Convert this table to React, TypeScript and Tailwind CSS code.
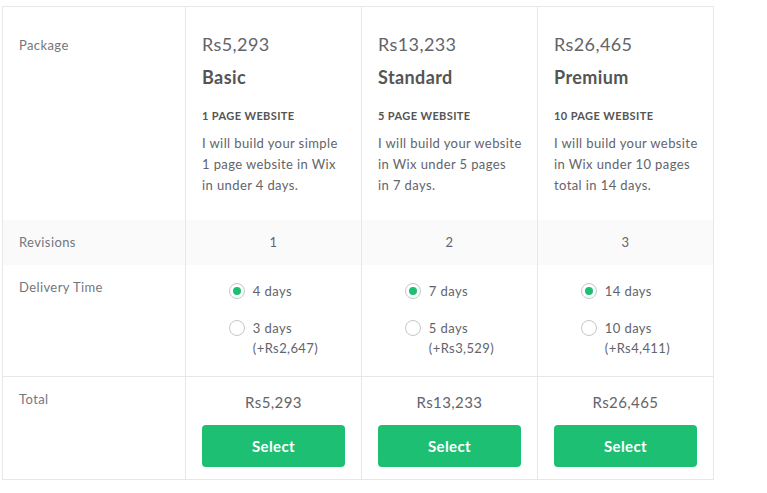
import React from 'react';

const plans = [
  {
    price: 'Rs5,293',
    name: 'Basic',
    tag: '1 PAGE WEBSITE',
    desc: ['I will build your simple', '1 page website in Wix', 'in under 4 days.'],
    revisions: '1',
    fast: '4 days',
    slow: '3 days',
    extra: '(+Rs2,647)',
  },
  {
    price: 'Rs13,233',
    name: 'Standard',
    tag: '5 PAGE WEBSITE',
    desc: ['I will build your website', 'in Wix under 5 pages', 'in 7 days.'],
    revisions: '2',
    fast: '7 days',
    slow: '5 days',
    extra: '(+Rs3,529)',
  },
  {
    price: 'Rs26,465',
    name: 'Premium',
    tag: '10 PAGE WEBSITE',
    desc: ['I will build your website', 'in Wix under 10 pages', 'total in 14 days.'],
    revisions: '3',
    fast: '14 days',
    slow: '10 days',
    extra: '(+Rs4,411)',
  },
];

const rowGrid = 'grid grid-cols-[182px_176px_176px_176px]';

export default function App() {
  return (
    <div className="bg-white min-h-screen pt-[6px] pl-[2px] font-['Lato','Liberation_Sans',sans-serif] tracking-[0.025em] text-[#62646a]">
      <div className="w-[712px] border border-[#e6e7e9]">
        <div className={rowGrid}>
          <div className="pl-4 pt-[28px] text-[13px] leading-5 text-[#74767e]">Package</div>
          {plans.map((p) => (
            <div key={p.name} className="border-l border-[#e6e7e9] px-4 pt-[25px] pb-[24px]">
              <div className="text-[18px] leading-6">{p.price}</div>
              <div className="mt-[9px] text-[18px] leading-6 font-bold text-[#555]">{p.name}</div>
              <div className="mt-[19px] text-[11px] leading-4 font-bold text-[#555]">{p.tag}</div>
              <div className="mt-[9px] text-[13px] leading-[21px] whitespace-nowrap">
                {p.desc.map((l) => (
                  <div key={l}>{l}</div>
                ))}
              </div>
            </div>
          ))}
        </div>

        <div className={`${rowGrid} bg-[#fafafa] h-[45px]`}>
          <div className="pl-4 flex items-center text-[13px] text-[#74767e]">Revisions</div>
          {plans.map((p) => (
            <div key={p.name} className="border-l border-[#e6e7e9] flex items-center justify-center text-[13px]">
              {p.revisions}
            </div>
          ))}
        </div>

        <div className={`${rowGrid} border-b border-[#e6e7e9]`}>
          <div className="pl-4 pt-[12px] text-[13px] leading-5 text-[#74767e]">Delivery Time</div>
          {plans.map((p) => (
            <div key={p.name} className="border-l border-[#e6e7e9] flex justify-center pt-4 pb-[17px]">
              <div className="text-[13px]">
                <div className="flex items-center gap-2 leading-5">
                  <Radio checked />
                  <span>{p.fast}</span>
                </div>
                <div className="mt-[17px] flex items-center gap-2 leading-5">
                  <Radio />
                  <span>{p.slow}</span>
                </div>
                <div className="pl-6 leading-[21px]">{p.extra}</div>
              </div>
            </div>
          ))}
        </div>

        <div className={rowGrid}>
          <div className="pl-4 pt-[12px] text-[13px] leading-5 text-[#74767e]">Total</div>
          {plans.map((p) => (
            <div key={p.name} className="border-l border-[#e6e7e9] px-4 pt-[15px] pb-[12px] flex flex-col items-center">
              <div className="text-[15px] leading-5">{p.price}</div>
              <button className="mt-[13px] w-full h-[42px] rounded bg-[#1dbf73] text-white text-[15px] font-bold tracking-[0.025em]">
                Select
              </button>
            </div>
          ))}
        </div>
      </div>
    </div>
  );
}

function Radio({ checked = false }: { checked?: boolean }) {
  return (
    <span className="w-4 h-4 rounded-full border border-[#c5c6c9] bg-white flex items-center justify-center">
      {checked && <span className="w-2 h-2 rounded-full bg-[#1dbf73]" />}
    </span>
  );
}
